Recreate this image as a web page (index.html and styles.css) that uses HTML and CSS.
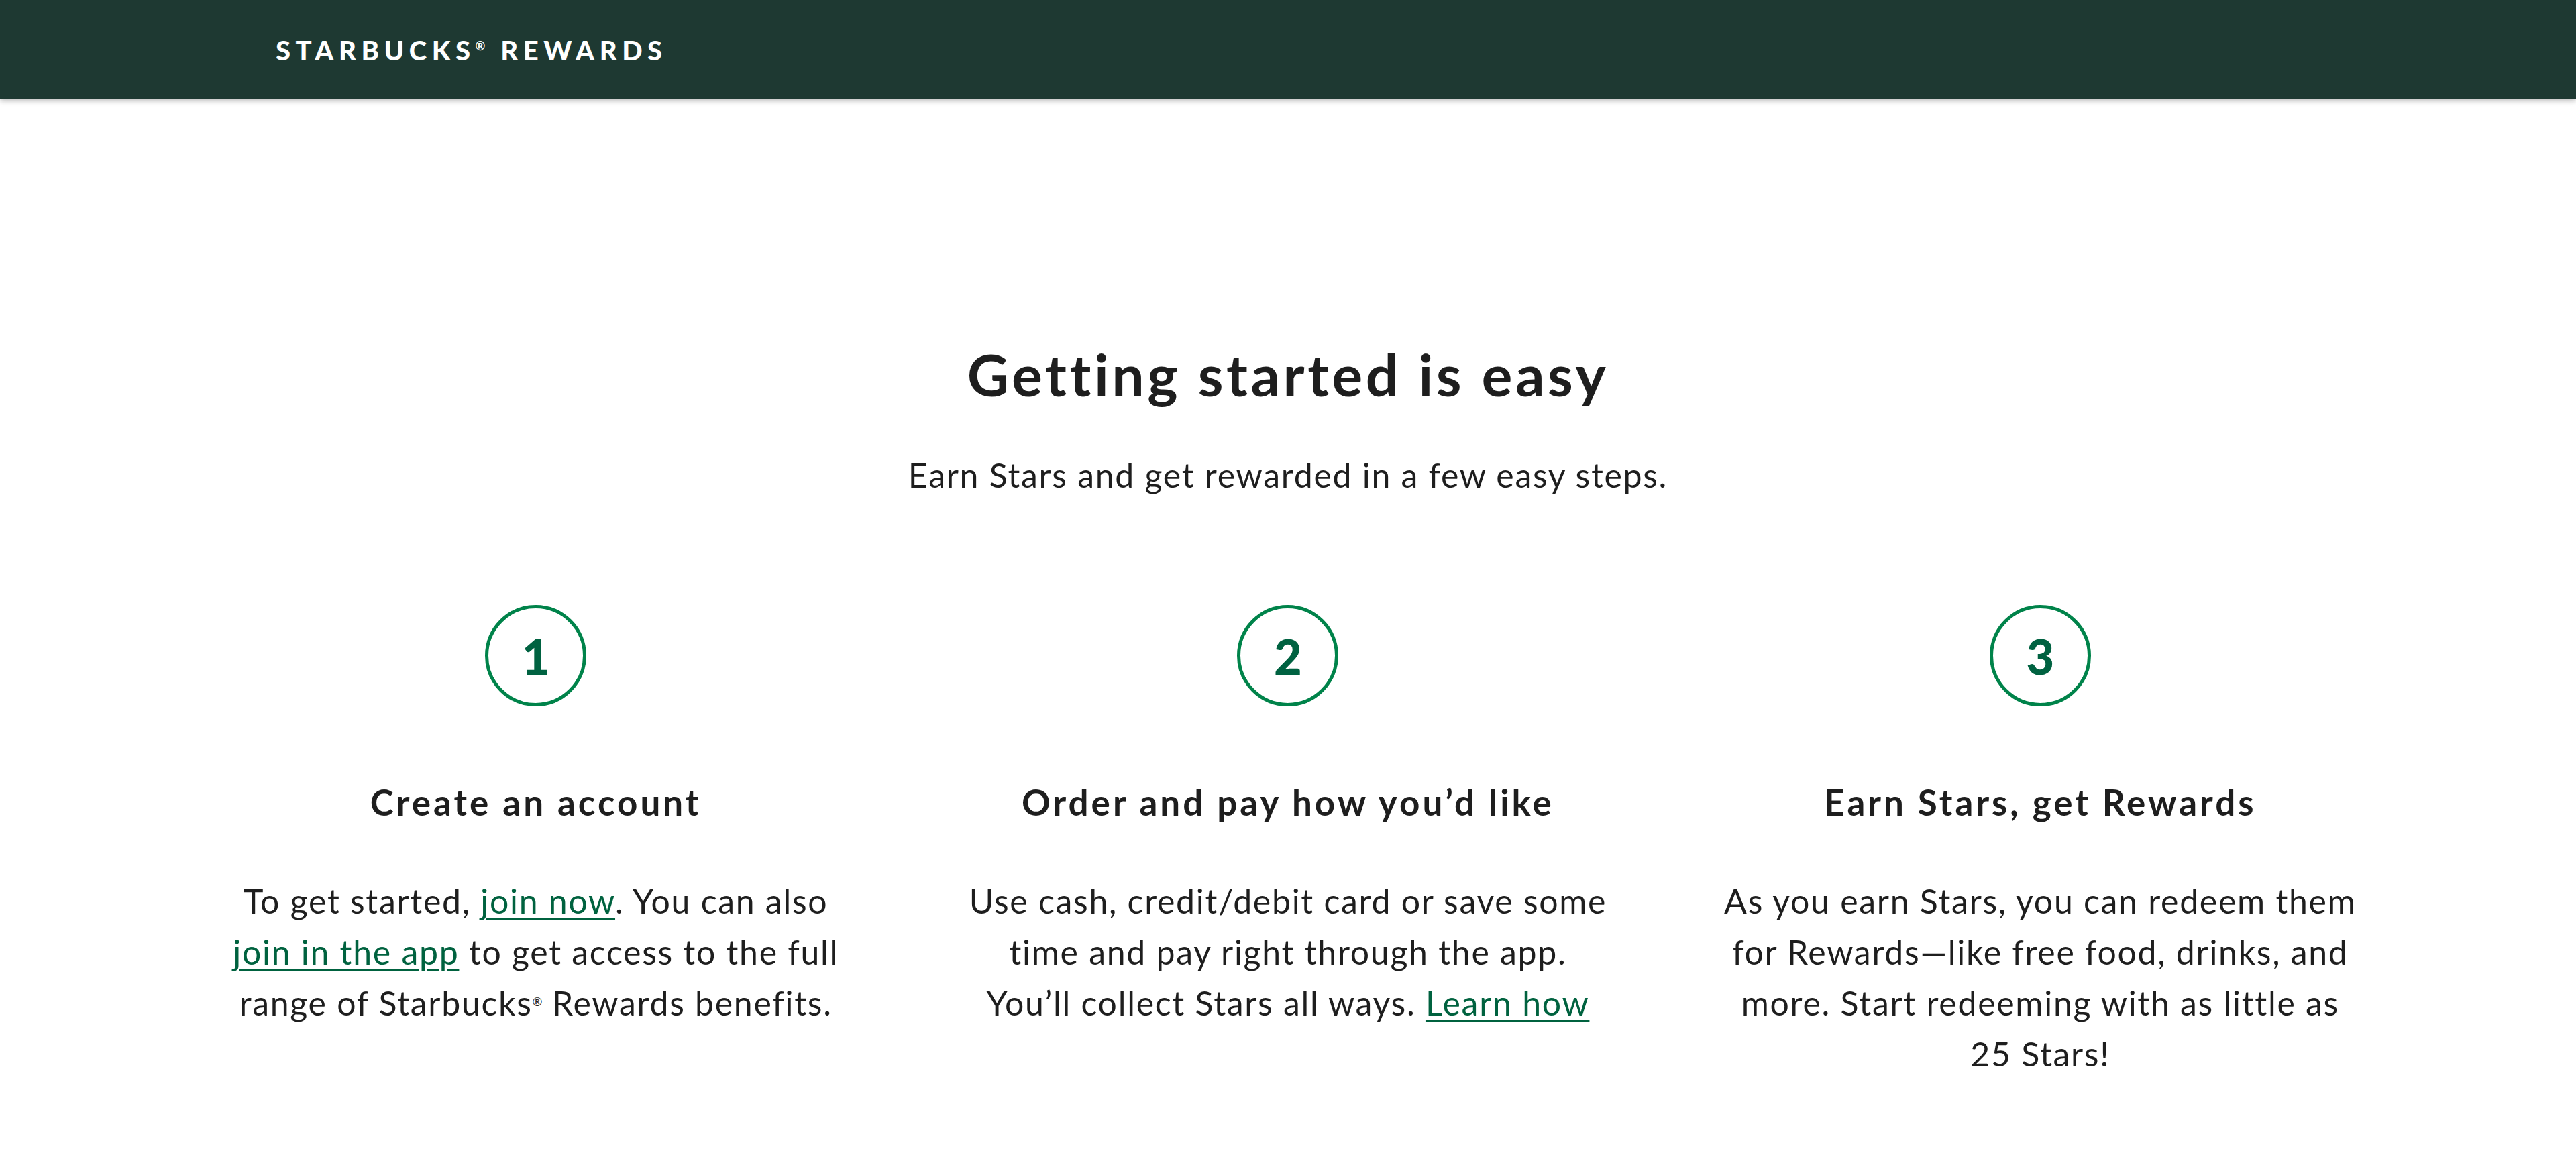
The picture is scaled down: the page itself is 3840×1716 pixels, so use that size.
FILE: index.html
```html
<!DOCTYPE html>
<html lang="en">
<head>
<meta charset="utf-8">
<title>Starbucks Rewards</title>
<link rel="stylesheet" href="styles.css">
</head>
<body>
<header class="topbar">
  <div class="brand">STARBUCKS<span class="reg">®</span> REWARDS</div>
</header>
<main class="intro">
  <h1 class="title">Getting started is easy</h1>
  <p class="subtitle">Earn Stars and get rewarded in a few easy steps.</p>
  <div class="steps">
    <section class="step">
      <div class="num">1</div>
      <h2 class="step-title">Create an account</h2>
      <p class="step-text">To get started, <a href="#">join now</a>. You can also <a href="#">join in the app</a> to get access to the full range of Starbucks<sup class="r">®</sup> Rewards benefits.</p>
    </section>
    <section class="step">
      <div class="num">2</div>
      <h2 class="step-title">Order and pay how you’d like</h2>
      <p class="step-text">Use cash, credit/debit card or save some time and pay right through the app. You’ll collect Stars all ways. <a href="#">Learn how</a></p>
    </section>
    <section class="step">
      <div class="num">3</div>
      <h2 class="step-title">Earn Stars, get Rewards</h2>
      <p class="step-text">As you earn Stars, you can redeem them for Rewards—like free food, drinks, and more. Start redeeming with as little as 25&nbsp;Stars!</p>
    </section>
  </div>
</main>
</body>
</html>
```
FILE: styles.css
```css
html, body {
  margin: 0;
  padding: 0;
  background: #ffffff;
}
body {
  font-family: Lato, "Open Sans", "Liberation Sans", sans-serif;
  color: #1e1e1e;
}
.topbar {
  height: 147px;
  background: #1e3932;
  box-shadow: 0 3px 8px rgba(0, 0, 0, 0.28);
  display: flex;
  align-items: center;
  padding-left: 411px;
}
.brand {
  color: #ffffff;
  font-weight: 900;
  font-size: 40px;
  letter-spacing: 7.5px;
  padding-top: 2px;
}
.brand .reg {
  font-size: 18px;
  vertical-align: 15px;
  letter-spacing: 0;
  margin: 0 6px 0 0;
  font-weight: 700;
}
.intro {
  display: flex;
  flex-direction: column;
  align-items: center;
  padding-top: 361px;
}
.title {
  margin: 0;
  font-size: 86px;
  line-height: 100px;
  font-weight: 700;
  letter-spacing: 4.5px;
  color: #1e1e1e;
}
.subtitle {
  margin: 70px 0 0;
  font-size: 50px;
  line-height: 60px;
  letter-spacing: 1.7px;
  color: #1e1e1e;
}
.steps {
  margin-top: 164px;
  width: 3364px;
  display: grid;
  grid-template-columns: repeat(3, 1fr);
}
.step {
  display: flex;
  flex-direction: column;
  align-items: center;
  text-align: center;
}
.num {
  width: 141px;
  height: 141px;
  border: 5px solid #00834a;
  border-radius: 50%;
  display: flex;
  align-items: center;
  justify-content: center;
  font-size: 72px;
  font-weight: 900;
  color: #006241;
}
.step-title {
  margin: 111px 0 0;
  font-size: 53px;
  line-height: 64px;
  font-weight: 700;
  letter-spacing: 4px;
  color: #1e1e1e;
}
.step-text {
  margin: 77px 0 0;
  width: 955px;
  font-size: 50px;
  line-height: 76px;
  letter-spacing: 1.7px;
  color: #1e1e1e;
}
.step-text a {
  color: #00623f;
  text-decoration: underline;
  text-underline-offset: 7px;
  text-decoration-thickness: 3px;
}
.r {
  font-size: 18px;
  vertical-align: 14px;
  line-height: 0;
  letter-spacing: 0;
}
```
